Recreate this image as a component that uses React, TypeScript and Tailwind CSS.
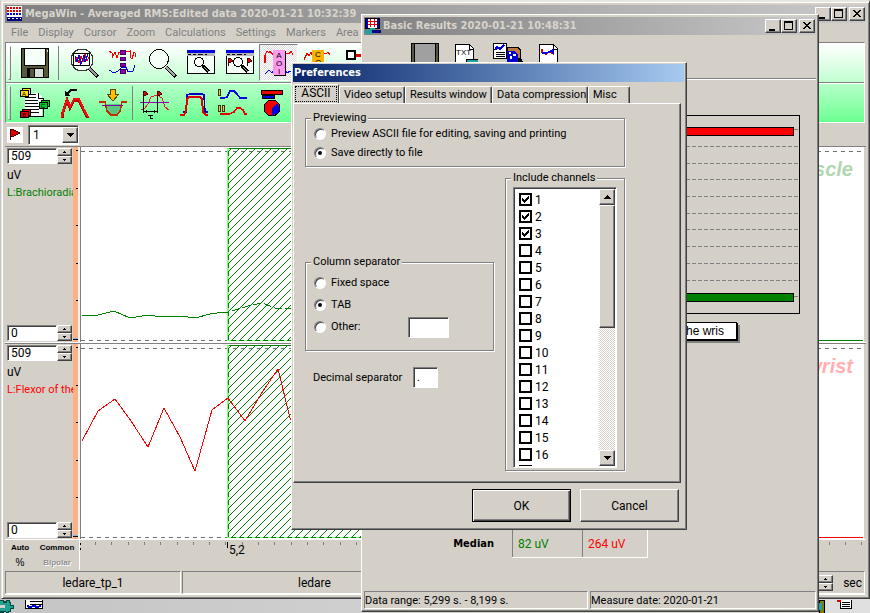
import type { ReactNode } from "react";

const RAISED =
  "border border-white border-r-[#404040] border-b-[#404040] shadow-[inset_-1px_-1px_0_#808080] bg-[#d4d0c8]";
const SUNKEN =
  "border border-[#808080] border-r-white border-b-white shadow-[inset_1px_1px_0_#404040]";
const GROUP =
  "border border-[#808080] shadow-[1px_1px_0_#fff,inset_1px_1px_0_#fff]";
const UI = "font-['Roboto','Liberation_Sans',sans-serif] text-[11px] leading-[14px]";
const TITLE = "font-['DejaVu_Sans_Condensed','DejaVu_Sans',sans-serif] text-[11px] font-bold leading-[18px]";

function Icon({ children, w = 30, h = 32 }: { children: ReactNode; w?: number; h?: number }) {
  return (
    <svg width={w} height={h} viewBox={`0 0 ${w} ${h}`} fill="none" shapeRendering="crispEdges" className="block shrink-0" aria-hidden="true">
      {children}
    </svg>
  );
}

function ToolButton({ label, children, pressed = false }: { label: string; children: ReactNode; pressed?: boolean }) {
  return (
    <button
      type="button"
      aria-label={label}
      className={`flex h-[37px] w-[39px] shrink-0 items-center justify-center ${
        pressed
          ? "border border-[#808080] border-r-white border-b-white bg-[repeating-conic-gradient(#fff_0_25%,#dcdcdc_0_50%)] bg-[length:2px_2px]"
          : ""
      }`}
    >
      {children}
    </button>
  );
}

function CaptionButtons() {
  return (
    <div className="flex shrink-0">
      <button type="button" aria-label="Minimize" className={`h-[14px] w-4 ${RAISED}`}>
        <Icon w={14} h={12}><path d="M3 9h6v2H3z" fill="#000" /></Icon>
      </button>
      <button type="button" aria-label="Maximize" className={`h-[14px] w-4 ${RAISED}`}>
        <Icon w={14} h={12}><path d="M2 1h9v9H2zM3 3v6h7V3z" fill="#000" fillRule="evenodd" /></Icon>
      </button>
      <button type="button" aria-label="Close" className={`ml-0.5 h-[14px] w-4 ${RAISED}`}>
        <Icon w={14} h={12}>
          <path d="M3 2h2v1h1v1h2V3h1V2h2v1h-1v1H9v1H8v1h1v1h1v1h1v1H9V8H8V7H6v1H5v1H3V8h1V7h1V6h1V5H5V4H4V3H3z" fill="#000" />
        </Icon>
      </button>
    </div>
  );
}

function Spinner() {
  return (
    <div className="flex w-[15px] shrink-0 flex-col">
      {["up", "down"].map((dir) => (
        <button key={dir} type="button" aria-label={dir} className={`flex h-2 w-[15px] items-center justify-center ${RAISED}`}>
          <Icon w={3} h={2}><path d={dir === "up" ? "M1 0h1v1h1v1H0V1h1z" : "M0 0h3v1H2v1H1V1H0z"} fill="#000" /></Icon>
        </button>
      ))}
    </div>
  );
}

function Flag({ x, y }: { x: number; y: number }) {
  return (
    <g transform={`translate(${x} ${y})`}>
      <path d="M0 0h1v8H0zM1 0h2v1h1v1h1v2H3v1H1z" fill="#400000" />
      <path d="M1 1h2v1h1v1H3v1H1z" fill="#e00000" />
    </g>
  );
}

function Handle() {
  return <span className="mr-1 ml-0.5 h-[34px] w-[3px] shrink-0 border border-white border-r-[#808080] border-b-[#808080]" />;
}

function SmallWindow({ children }: { children?: ReactNode }) {
  return (
    <Icon>
      <path d="M1 4h28v23H1z" fill="#f4fff8" />
      <path d="M1.500 9v17.500h27V9" stroke="#000" />
      <path d="M1 3h28v3H1z" fill="#0000e0" />
      <path d="M1 6h28v3H1z" fill="#b8b8b8" />
      <path d="M2 7.500h3m2 0h3m2 0h5m2 0h2" stroke="#000" />
      <circle cx="13" cy="15" r="4.500" fill="#fff" stroke="#000" />
      <path d="M17 19l6 6" stroke="#000" strokeWidth="3" />
      <path d="M18 20l5 5" stroke="#aaa" />
      {children}
    </Icon>
  );
}

function ToolRowOne() {
  return (
    <div className="flex h-[39px] items-center">
      <Handle />
      <ToolButton label="Save">
        <Icon>
          <path d="M1 1h28v30H1z" fill="#000" />
          <path d="M2 2h26v28H2z" fill="#57573a" />
          <path d="M4.500 1.500h21v17h-21z" fill="#f6fff8" stroke="#000" />
          <path d="M7 21h17v10H7z" fill="#000" />
          <path d="M15 22h8v8h-8z" fill="#d8e0d8" />
          <path d="M10 22h4v8h-4z" fill="#57573a" />
          <path d="M27 3h1v2h-1z" fill="#ddd" />
        </Icon>
      </ToolButton>
      <span className="mr-[5px] ml-1 h-[34px] w-px shrink-0 bg-[#808080]" />
      <ToolButton label="Zoom to data">
        <Icon>
          <circle cx="13" cy="13" r="11" fill="#f4fff8" stroke="#333" />
          <path d="M4.500 6.500h16v12h-16z" fill="#fff" stroke="#000" />
          <path d="M6 15l2-5 2 6 2-7 2 6 2-8 2 7 2-4" stroke="#e00000" />
          <path d="M6 9l2 6 2-7 2 9 3-9 1 7 3-8" stroke="#0000e0" strokeWidth="1.200" />
          <path d="M20 21l9 9" stroke="#000" strokeWidth="4" />
          <path d="M20 21l8 8" stroke="#999" strokeWidth="2" />
        </Icon>
      </ToolButton>
      <ToolButton label="Markers">
        <Icon>
          <path d="M1 4l3 2v5l3-6 2 6 2-6h7l4-1v6l2 2 2-7 1 1v4" stroke="#f00000" />
          <path d="M1 23l5 3 4-2 4-4h4l2 5 5-1 2-6" stroke="#0000e0" />
          <path d="M12.500 3.500h5v4h-5zM12.500 10.500h5v3h-5zM12.500 16.500h5v3h-5zM12.500 22.500h5v4h-5z" fill="#9000b0" stroke="#400060" />
        </Icon>
      </ToolButton>
      <ToolButton label="Magnify">
        <Icon>
          <circle cx="12" cy="12" r="9.500" fill="#f4fff8" stroke="#000" />
          <path d="M19 20l10 10" stroke="#000" strokeWidth="4" />
          <path d="M19 20l9 9" stroke="#aaa" strokeWidth="2" />
        </Icon>
      </ToolButton>
      <ToolButton label="Zoom window"><SmallWindow /></ToolButton>
      <ToolButton label="Zoom between markers">
        <SmallWindow><Flag x={3} y={11} /><Flag x={22} y={11} /></SmallWindow>
      </ToolButton>
      <ToolButton label="Area of interest" pressed>
        <Icon>
          <path d="M1 16V8l2-4 2 2 1-2 3 4M22 6l3 1 2-3 2 4" stroke="#f00000" strokeWidth="1.200" />
          <path d="M1 27l4-4 3 3 4-8 4-3 4 4 3 7 3-2 3 3" stroke="#0000e0" />
          <path d="M9 3h12v25H9z" fill="#ff90f0" fillOpacity=".9" />
          <path d="M21.500 4v24.500H10" stroke="#000" />
          <g fill="#000" fontFamily="Liberation Sans, sans-serif" fontSize="8" textAnchor="middle">
            <text x="15" y="11">A</text><text x="15" y="19">O</text><text x="15" y="27">I</text>
          </g>
        </Icon>
      </ToolButton>
      <ToolButton label="Center of gravity">
        <Icon>
          <path d="M1 13l3-7 2 3 2-4 2 5M21 6l2 1 2-2 2 3" stroke="#f00000" strokeWidth="1.200" />
          <path d="M9 3h12v26H9z" fill="#ffb400" />
          <g fill="#000" fontFamily="Liberation Sans, sans-serif" fontSize="8" textAnchor="middle">
            <text x="15" y="10">C</text><text x="15" y="18">O</text>
          </g>
        </Icon>
      </ToolButton>
      <ToolButton label="Link">
        <Icon>
          <path d="M13 8.500h17" stroke="#e00000" strokeWidth="3" />
          <path d="M5 4h8v8H5z" fill="#fff" stroke="#000" strokeWidth="2" />
        </Icon>
      </ToolButton>
    </div>
  );
}

function Cube({ x, y, fill, letter }: { x: number; y: number; fill: string; letter: string }) {
  return (
    <g transform={`translate(${x} ${y})`}>
      <path d="M2 0h9v7H9v2H0V2h2z" fill="#000" />
      <path d="M3 1h7v5H9V2H3zM1 3h7v5H1z" fill={fill} />
      <text x="4" y="8" fill="#000" fontFamily="Liberation Sans, sans-serif" fontSize="6" textAnchor="middle">{letter}</text>
    </g>
  );
}

function ToolRowTwo() {
  return (
    <div className="flex h-[38px] items-center">
      <Handle />
      <ToolButton label="Export report">
        <Icon w={32}>
          <path d="M6 6h13l4 4v19H6z" fill="#fff" />
          <path d="M19.500 6v5H24v18H10" stroke="#000" />
          <path d="M6 7.500h11M6 10.500h11M6 13.500h13M6 16.500h13M6 19.500h14M10 22.500h10M10 25.500h10" stroke="#000" />
          <Cube x={1} y={1} fill="#ffe000" letter="A" />
          <Cube x={20} y={13} fill="#00c828" letter="C" />
          <Cube x={1} y={22} fill="#e80000" letter="B" />
        </Icon>
      </ToolButton>
      <ToolButton label="Peaks">
        <Icon>
          <path d="M3 31l1-6 4-12 3 8 4-8h5l4 9 5 9" stroke="#b00000" strokeWidth="3" />
          <path d="M3 30l1-6 4-11 3 7 4-8h5l4 9 5 9" stroke="#f01010" strokeWidth="2" />
          <path d="M18 3h-6l-4 4" stroke="#000" strokeWidth="1.500" />
          <path d="M6 4v5h6z" fill="#000" />
        </Icon>
      </ToolButton>
      <ToolButton label="Fill area">
        <Icon>
          <path d="M8 17h15l-1 8-4 3h-7l-3-5z" fill="#58c880" />
          <path d="M1 15h6l2 9 4 4h6l3-4 2-9h5" stroke="#c03000" strokeWidth="1.500" />
          <path d="M4 18.500h21" stroke="#8000a0" />
          <path d="M12.500 2.500h5v5h3l-5 6h-1l-5-6h3z" fill="#ffc000" stroke="#604000" />
        </Icon>
      </ToolButton>
      <span className="mr-0.5 h-[34px] w-px shrink-0 bg-[#808080]" />
      <ToolButton label="Time between flags">
        <Icon>
          <path d="M1 22h3l4-5 3-7 6-2 5 3 3 9 4 3" stroke="#e02020" />
          <path d="M0 15.500h29" stroke="#9000c0" />
          <Flag x={3} y={4} /><Flag x={17} y={4} />
          <path d="M3.500 12v14M17.500 12v14M4 24.500h13M6.500 23v3M14.500 23v3" stroke="#000" />
          <path d="M8 28.500h5M10.500 28v3h2" stroke="#000" />
        </Icon>
      </ToolButton>
      <ToolButton label="Pulse">
        <Icon>
          <path d="M4 25h3l1-17 3-1h12l2 1 1 17h3" stroke="#0000c0" strokeWidth="1.500" />
          <path d="M1 28h4l2-4 1-12 2-2h11l2 2 1 13 3 3h2" stroke="#e00000" strokeWidth="2" />
        </Icon>
      </ToolButton>
      <ToolButton label="Compare signals">
        <Icon>
          <path d="M2 11h4l3-1 3-6h4l3 3 3 4h7" stroke="#0000e0" strokeWidth="1.500" />
          <path d="M2 27h9l5-2 3-4h3l3 2 2 4h2" stroke="#e00000" strokeWidth="1.500" />
          <path d="M.5 2.500h2v6h-2zM.5 18.500h2v6h-2zM4.500 18.500h2v6h-2z" fill="#ffd000" stroke="#403000" />
        </Icon>
      </ToolButton>
      <ToolButton label="Charts">
        <Icon>
          <path d="M4.500 3.500h21v4h-21z" fill="#f00000" stroke="#000" />
          <path d="M5.500 8.500h12v3h-12z" fill="#0000e0" stroke="#000" />
          <circle cx="15" cy="21" r="8" fill="#f00000" stroke="#000" />
          <path d="M15 22l5-6 2 4v4l-3 3-4 1z" fill="#0000e0" />
        </Icon>
      </ToolButton>
    </div>
  );
}

type ChannelProps = {
  name: string;
  nameClass: string;
  color: string;
  points: string;
  dashedPoints: string;
  watermark: string;
  watermarkClass: string;
  id: string;
};

function Channel({ name, nameClass, color, points, dashedPoints, watermark, watermarkClass, id }: ChannelProps) {
  return (
    <div className="flex min-h-0 flex-1 border-t border-b border-t-[#808080] border-b-white">
      <div className="flex w-[68px] shrink-0 flex-col justify-between overflow-hidden px-0.5 py-px">
        <div>
          <div className="flex">
            <input aria-label={`${name} maximum`} defaultValue="509" className={`h-4 w-[50px] bg-white px-[3px] text-[12px] ${SUNKEN}`} />
            <Spinner />
          </div>
          <p className="mt-1 text-[12px]">uV</p>
          <p className={`mt-1 whitespace-nowrap ${nameClass}`}>{name}</p>
        </div>
        <div className="flex">
          <input aria-label={`${name} minimum`} defaultValue="0" className={`h-4 w-[50px] bg-white px-[3px] text-[12px] ${SUNKEN}`} />
          <Spinner />
        </div>
      </div>
      <div className="flex w-[5px] shrink-0 flex-col items-end justify-between bg-[#ffb080] pt-[3px] pb-0.5">
        {[0, 1, 2, 3, 4].map((t) => <span key={t} className="h-px w-0.5 bg-black" />)}
        <span className="h-0.5 w-full border-b border-black bg-[#80b8e0]" />
      </div>
      <div className="w-[3px] shrink-0 border-r border-[#808080] bg-[#f4f2ee]" />
      <div className="relative min-w-0 flex-1 bg-white">
        <svg className="block h-full w-full" shapeRendering="crispEdges" fill="none" aria-hidden="true">
          <defs>
            <pattern id={id} width="8" height="8" patternUnits="userSpaceOnUse">
              <path d="M-1 9L9-1M-1 1L1-1M7 9L9 7" stroke="#008000" strokeWidth="1" />
            </pattern>
          </defs>
          <path d="M0 4.500H2000M0 193.500H280" stroke="#707070" strokeDasharray="4 4" />
          <path d="M147 1h150v193H147z" fill={`url(#${id})`} />
          <path d="M146.500 1v193" stroke="#80ff80" />
          <path d="M147.500 1v193M147 1.500h150M147 193.500h150" stroke="#008000" />
          <path d="M147.500 1v193M147 193.500h150" stroke="#80ff80" strokeDasharray="3 5" />
          <polyline points={points} stroke={color} />
          <polyline points={dashedPoints} stroke={color} strokeDasharray={id === "hatch-a" ? "8 3" : undefined} />
          <path d="M600 193.500H2000" stroke={color} />
        </svg>
        <span className={`absolute top-2.5 right-2.5 font-['Liberation_Sans',sans-serif] text-[20px] leading-6 font-bold italic ${watermarkClass}`}>{watermark}</span>
      </div>
      <div className="w-[3px] shrink-0 border-l border-white" />
    </div>
  );
}

const AXIS_TICKS = Array.from({ length: 48 }, (_, i) => 15.5 + Math.round(i * 16.3));

function MainWindow() {
  return (
    <section aria-label="MegaWin" className={`absolute top-0 right-0 bottom-[14px] left-px flex flex-col border border-t-2 border-[#e8e6e0] border-r-[#404040] border-b-[#404040] bg-[#d4d0c8] p-[3px] shadow-[inset_1px_1px_0_#fff,inset_-1px_-1px_0_#808080] ${UI}`}>
      <header className={`flex h-[18px] shrink-0 items-center bg-linear-to-r from-[#808080] to-[#c8c8c8] pr-px text-[#d8d4cc] ${TITLE}`}>
        <Icon w={19} h={16}>
          <path d="M2 0h15v15H2z" fill="#fff" />
          <path d="M2 2h15M2 5h15" stroke="#e00000" strokeWidth="2" strokeDasharray="2 1" />
          <path d="M2 8h15" stroke="#0000e0" strokeWidth="2" strokeDasharray="2 1" />
          <path d="M2 11h15v4H2z" fill="#000080" />
          <path d="M3 12.500h13" stroke="#fff" strokeDasharray="2 2" />
        </Icon>
        <h1 className="min-w-0 flex-1 truncate pl-px">MegaWin - Averaged RMS:Edited data 2020-01-21 10:32:39</h1>
        <CaptionButtons />
      </header>
      <nav className="flex h-[19px] shrink-0 items-center gap-2.5 pl-1.5 text-[#808080]">
        {["File", "Display", "Cursor", "Zoom", "Calculations", "Settings", "Markers", "Area"].map((m) => (
          <button key={m} type="button">{m}</button>
        ))}
      </nav>
      <div className="mr-px h-[81px] shrink-0 border border-[#808080] border-r-white border-b-white bg-linear-to-b from-white to-[#66ff90]">
        <div className="border-b border-[#808080] bg-linear-to-b from-white to-[#c0ffd0]"><ToolRowOne /></div>
        <div className="border-t border-white bg-linear-to-b from-[#b4ffc8] to-[#68ff90]"><ToolRowTwo /></div>
      </div>
      <div className="flex h-[23px] shrink-0 items-center gap-[5px] pl-0.5">
        <button type="button" aria-label="Event flag" className="size-4 bg-white">
          <Icon w={16} h={16}>
            <path d="M3 2h1v11H3zM4 2h3v1h2v1h2v1h2v2h-2v1H9v1H7v1H4z" fill="#400000" />
            <path d="M4 3h3v1h2v1h2v2H9v1H7v1H4z" fill="#d80000" />
          </Icon>
        </button>
        <div className="relative">
          <select aria-label="Event" defaultValue="1" className={`block h-5 w-[51px] appearance-none rounded-none bg-white px-1 text-[12px] ${SUNKEN}`}>
            <option>1</option>
            <option>2</option>
          </select>
          <span className={`pointer-events-none absolute top-0.5 right-px flex h-4 w-4 items-center justify-center ${RAISED}`}>
            <Icon w={7} h={4}><path d="M0 0h7L4 4H3z" fill="#000" /></Icon>
          </span>
        </div>
      </div>
      <main className="flex min-h-0 flex-1 flex-col">
        <Channel
          id="hatch-a" name="L:Brachioradialis" nameClass="text-[#008000]" color="#008000"
          points="1,169 17,168 33,164 49,171 67,168 81,170 99,169 114,171 129,167 144,165 147,165"
          dashedPoints="151,164 167,159 181,156 197,162 209,161 240,164"
          watermark="muscle" watermarkClass="text-[#b0d8b0]"
        />
        <Channel
          id="hatch-b" name="L:Flexor of the wrist" nameClass="text-[#ff0000]" color="#ff0000"
          points="1,97 17,67 34,55 50,77 67,103 83,64 99,93 114,127 131,66 147,54"
          dashedPoints="147,54 164,77 180,50 197,25 209,74 220,100"
          watermark="wrist" watermarkClass="text-[#ffb0b0]"
        />
      </main>
      <div className="flex h-[30px] shrink-0">
        <div className="grid w-[75px] shrink-0 grid-cols-[30px_1fr] border-r border-white text-center font-['Liberation_Sans',sans-serif] text-[8px] leading-[15px] font-bold">
          <span>Auto</span>
          <span>Common</span>
          <span className="text-[10px] font-normal">%</span>
          <span className="text-[#909090] [text-shadow:1px_1px_0_#fff]">Bipolar</span>
        </div>
        <svg className="h-full min-w-0 flex-1" shapeRendering="crispEdges" aria-label="Time axis">
          <path d={AXIS_TICKS.map((x) => `M${x} 2v3`).join("")} stroke="#808080" fill="none" />
          <path d="M147.500 2v6M.5 3v2M.5 8v2" stroke="#000" />
          <text x="149" y="14" fontSize="12" fill="#000">5,2</text>
        </svg>
      </div>
      <footer className="flex h-[25px] shrink-0 gap-px border-b border-white pt-px pr-px text-[12px]">
        <div className="flex w-[176px] items-center justify-center border border-[#808080] border-r-white border-b-white">ledare_tp_1</div>
        <div className="flex w-[265px] items-center justify-center border border-[#808080] border-r-white border-b-white">ledare</div>
        <div className="flex flex-1 items-center justify-end gap-2.5 border border-[#808080] border-r-white border-b-white pr-0.5">
          <Spinner />
          <span>sec</span>
        </div>
      </footer>
    </section>
  );
}

function ResultsWindow() {
  return (
    <section aria-label="Basic Results" className={`absolute top-[14px] bottom-px left-[361px] flex w-[458px] flex-col border border-white border-r-[#404040] border-b-[#404040] bg-[#d4d0c8] p-0.5 shadow-[inset_-1px_-1px_0_#808080] ${UI}`}>
      <header className={`flex h-[18px] shrink-0 items-center bg-linear-to-r from-[#808080] to-[#c8c8c8] pr-px text-[#d8d4cc] ${TITLE}`}>
        <Icon w={18} h={16}>
          <path d="M1 0h15v11H1z" fill="#000" />
          <path d="M2 1h13v9H2z" fill="#0000c0" />
          <path d="M4 1h9v9H4z" fill="#fff" />
          <path d="M4 3.500h9M4 6.500h9M6.500 1v8M10.500 1v8" stroke="#e00000" />
          <path d="M1 12h3l2-2h5v3l-3 3H1z" fill="#20a0a0" />
          <path d="M8 12h9v3H8z" fill="#000080" />
        </Icon>
        <h2 className="min-w-0 flex-1 truncate pl-px">Basic Results 2020-01-21 10:48:31</h2>
        <CaptionButtons />
      </header>
      <div className="flex h-[44px] shrink-0 items-start gap-[15px] border-b border-[#808080] pt-2 pl-[47px] shadow-[0_1px_0_#fff]">
        <button type="button" aria-label="Save">
          <Icon w={28} h={30}><path d="M0 0h28v30H0z" fill="#000" /><path d="M1 1h2v28H1zM25 1h2v28h-2z" fill="#57573a" /><path d="M4 1h20v18H4z" fill="#a0a0a0" /></Icon>
        </button>
        <button type="button" aria-label="Export text">
          <Icon w={24} h={30}>
            <path d="M1 1h14l5 5v23H1z" fill="#fff" />
            <path d="M1.500 29V1.500h14l4 4V29M15.500 1v5h4" stroke="#000" />
            <text x="2" y="12" fontSize="8" fill="#000" fontFamily="Liberation Sans, sans-serif">TXT</text>
            <path d="M12.500 16.500h12v6h-12z" fill="#20a0a0" stroke="#000" />
          </Icon>
        </button>
        <button type="button" aria-label="Report">
          <Icon w={30} h={30}>
            <path d="M14 4h11l3 3v8l2 4H14z" fill="#000" />
            <path d="M15 5h10l2 3v7H15z" fill="#b87840" />
            <path d="M14 8h8l3 4v7H14z" fill="#0000d0" />
            <path d="M16 9h2v2h-2zM20 11h3v2h-3zM17 13h2v3h-2z" fill="#fff" />
            <path d="M.5.500h13v15H.5z" fill="#fff" stroke="#000" />
            <path d="M2 7l2-3 3 2 4-4" stroke="#0000e0" strokeWidth="2" />
            <path d="M3 9.500h9M3 11.500h9M3 13.500h9" stroke="#000" />
          </Icon>
        </button>
        <button type="button" aria-label="Graph report">
          <Icon w={22} h={30}>
            <path d="M1 1h14l5 5v23H1z" fill="#fff" />
            <path d="M1.500 29V1.500h14l4 4V29M15.500 1v5h4" stroke="#000" />
            <path d="M4 6v3l4 2 3-2 5 2" stroke="#e00000" strokeWidth="1.500" />
            <path d="M4 10h4l3-1 4-2v4" stroke="#0000e0" strokeWidth="1.500" />
          </Icon>
        </button>
      </div>
      <div className="flex shrink-0 justify-end pt-[36px] pr-4">
        <svg width="320" height="199" shapeRendering="crispEdges" fill="none" role="img" aria-label="Channel averages">
          <path d="M.5.500h319v198H.5z" stroke="#000" />
          <path
            d="M2 14.500h317M2 31.500h317M2 48.500h317M2 64.500h317M2 81.500h317M2 98.500h317M2 114.500h317M2 131.500h317M2 148.500h317M2 165.500h317M2 181.500h317"
            stroke="#808080" strokeDasharray="4 2"
          />
          <path d="M20.500 12.500h293v8h-293z" fill="#ff0000" stroke="#000" />
          <path d="M20.500 178.500h293v8h-293z" fill="#008000" stroke="#000" />
        </svg>
      </div>
      <div className="flex shrink-0 justify-end pt-2 pr-[79px]">
        <span className="border border-black bg-white py-px pr-3 pl-4 font-['Liberation_Sans',sans-serif] text-[12px] shadow-[1px_1px_0_#000,3px_3px_0_#808080]">the wris</span>
      </div>
      <div className="flex flex-1 flex-col items-end justify-end pr-[168px] pb-[33px]">
        <table className="border-collapse">
          <tbody>
            <tr>
              <th scope="row" className={`pr-[18px] ${TITLE}`}>Median</th>
              <td className="h-7 w-[70px] border border-[#808080] border-b-white pl-[5px] text-[12px] text-[#008000]">82 uV</td>
              <td className="h-7 w-[65px] border border-[#808080] border-r-white border-b-white border-l-[#b8b8c0] pl-[5px] text-[12px] text-[#ff0000]">264 uV</td>
            </tr>
          </tbody>
        </table>
      </div>
      <footer className="flex h-[18px] shrink-0 gap-0.5">
        <div className="w-[224px] truncate border border-[#808080] border-r-white border-b-white leading-[17px]">Data range: 5,299 s. - 8,199 s.</div>
        <div className="flex-1 truncate border border-[#808080] border-r-white border-b-white leading-[17px]">Measure date: 2020-01-21</div>
      </footer>
    </section>
  );
}

function Radio({ name, label, checked = false }: { name: string; label: string; checked?: boolean }) {
  return (
    <label className="flex items-center gap-[5px]">
      <span className="relative block size-3">
        <input
          type="radio" name={name} defaultChecked={checked}
          className="peer block size-3 appearance-none rounded-full border border-[#808080] border-r-white border-b-white bg-white shadow-[inset_1px_1px_0_#404040]"
        />
        <span className="pointer-events-none absolute top-1 left-1 hidden size-1 rounded-full bg-black peer-checked:block" />
      </span>
      {label}
    </label>
  );
}

function ChannelCheck({ n }: { n: number }) {
  return (
    <label className="flex h-[17px] items-center gap-[3px] text-[12px]">
      <span className="relative block size-[13px]">
        <input type="checkbox" defaultChecked={n <= 3} className="peer block size-[13px] appearance-none border-2 border-black bg-white" />
        <svg className="pointer-events-none absolute inset-0 hidden size-[13px] peer-checked:block" viewBox="0 0 13 13" shapeRendering="crispEdges" aria-hidden="true">
          <path d="M3 5h1v1h1v1h1V6h1V5h1V4h1V3h1v3H9v1H8v1H7v1H6v1H5V9H4V8H3z" fill="#000" />
        </svg>
      </span>
      {n}
    </label>
  );
}

const TABS: [string, string][] = [
  ["Video setup", "w-[66px]"],
  ["Results window", "w-[87px]"],
  ["Data compression", "w-[96px]"],
  ["Misc", "w-[42px]"],
];

function PreferencesDialog() {
  return (
    <section role="dialog" aria-label="Preferences" className={`absolute top-[62px] left-[291px] flex w-[396px] flex-col border border-white border-r-[#404040] border-b-[#404040] bg-[#d4d0c8] px-px pt-px pb-[7px] shadow-[inset_-1px_-1px_0_#808080] ${UI}`}>
      <header className={`mr-px h-[18px] bg-linear-to-r from-[#0a246a] to-[#a6caf0] pl-px text-white ${TITLE}`}>
        <h2>Preferences</h2>
      </header>
      <div role="tablist" className="flex h-[21px] items-end pt-0.5">
        <button type="button" role="tab" aria-selected="true" className="h-[19px] w-[46px] rounded-t-[2px] border-t border-r border-l border-white border-r-[#404040] p-px">
          <span className="block h-4 border border-dotted border-black text-[12px] leading-[13px]">ASCII</span>
        </button>
        {TABS.map(([t, w]) => (
          <button key={t} type="button" role="tab" aria-selected="false" className={`h-[17px] rounded-t-[2px] border-t border-r border-l border-white border-r-[#404040] pl-1 text-left whitespace-nowrap shadow-[inset_-1px_0_0_#808080] ${w}`}>{t}</button>
        ))}
      </div>
      <div role="tabpanel" className="mr-1 h-[380px] border border-white border-r-[#404040] border-b-[#404040] px-[11px] pt-[7px] shadow-[inset_-1px_-1px_0_#808080]">
        <fieldset className={`h-[56px] w-[320px] px-[5px] ${GROUP}`}>
          <legend className="bg-[#d4d0c8] px-0.5">Previewing</legend>
          <div className="flex flex-col gap-[5px] px-[3px] pt-0.5">
            <Radio name="preview" label="Preview ASCII file for editing, saving and printing" />
            <Radio name="preview" label="Save directly to file" checked />
          </div>
        </fieldset>
        <div className="mt-1 flex w-[320px] items-start justify-between">
          <div className="w-[189px] pt-[84px]">
            <fieldset className={`h-[96px] px-[5px] ${GROUP}`}>
              <legend className="bg-[#d4d0c8] px-0.5">Column separator</legend>
              <div className="flex flex-col px-[3px] pt-[3px]">
                <div className="flex h-[22px] items-center"><Radio name="separator" label="Fixed space" /></div>
                <div className="flex h-[22px] items-center"><Radio name="separator" label="TAB" checked /></div>
                <div className="flex h-[22px] items-center justify-between pr-9">
                  <Radio name="separator" label="Other:" />
                  <input aria-label="Other separator" className={`h-[21px] w-[41px] bg-white px-1 ${SUNKEN}`} />
                </div>
              </div>
            </fieldset>
            <div className="mt-4 flex items-center justify-between pr-14 pl-2">
              <label htmlFor="decimal">Decimal separator</label>
              <input id="decimal" defaultValue="." className={`h-[21px] w-[25px] bg-white px-[3px] ${SUNKEN}`} />
            </div>
          </div>
          <fieldset className={`h-[300px] w-[120px] px-[5px] ${GROUP}`}>
            <legend className="bg-[#d4d0c8] px-0.5">Include channels</legend>
            <div className={`mt-0.5 ml-0.5 flex h-[281px] w-[104px] overflow-hidden bg-white p-px ${SUNKEN}`}>
              <div className="min-h-0 flex-1 overflow-hidden pt-0.5 pl-1">
                {Array.from({ length: 17 }, (_, i) => <ChannelCheck key={i} n={i + 1} />)}
              </div>
              <div className="flex w-4 flex-col bg-[repeating-conic-gradient(#fff_0_25%,#d4d0c8_0_50%)] bg-[length:2px_2px]">
                <button type="button" aria-label="Scroll up" className={`flex h-4 items-center justify-center ${RAISED}`}>
                  <Icon w={7} h={4}><path d="M3 0h1l3 4H0z" fill="#000" /></Icon>
                </button>
                <div className={`h-[123px] ${RAISED}`} />
                <button type="button" aria-label="Scroll down" className={`mt-auto flex h-4 items-center justify-center ${RAISED}`}>
                  <Icon w={7} h={4}><path d="M0 0h7L4 4H3z" fill="#000" /></Icon>
                </button>
              </div>
            </div>
          </fieldset>
        </div>
      </div>
      <div className="flex justify-end gap-[9px] pt-[6px] pr-[6px]">
        <button type="button" className="h-[33px] w-[99px] border border-black bg-[#d4d0c8] text-[12px] shadow-[inset_1px_1px_0_#fff,inset_-1px_-1px_0_#404040,inset_-2px_-2px_0_#808080]">OK</button>
        <button type="button" className={`h-[33px] w-[99px] text-[12px] ${RAISED}`}>Cancel</button>
      </div>
    </section>
  );
}

function Desktop() {
  return (
    <div className="flex h-full flex-col justify-between bg-linear-to-r from-[#c4c4c4] to-[#e0e0e0]">
      <div className="h-[120px] w-0.5 bg-linear-to-b from-[#d4d0c8] to-[#80ffa0]" />
      <div className="flex h-[14px] items-end justify-between pr-[17px]">
        <div className="flex items-end gap-2.5">
          <Icon w={14} h={13}>
            <path d="M0 0h4v1h2V0h4v2h1v3h3v4h-3v3h-2v1H6v-1H4v1H0z" fill="#004840" />
            <path d="M0 1h3v2h4V1h2v2h1v3h3v2h-3v3H8v1H6v-1H0z" fill="#20a090" />
            <path d="M0 5h5v3H0z" fill="#d0d0d0" />
          </Icon>
          <Icon w={20} h={13}>
            <path d="M1.500 0v8.500h17V0" fill="#fff" stroke="#000" /><path d="M6 1.500h13M6 4.500h13" stroke="#000" />
            <path d="M3 6l3 1 4-1 3 1 4-1" stroke="#0000e0" strokeWidth="2" />
          </Icon>
        </div>
        <div className="flex items-end gap-3">
          <Icon w={6} h={13}><path d="M0 0h5v13H0z" fill="#808000" stroke="#000" /><path d="M0 3h3v7H0z" fill="#20a0a0" /></Icon>
          <Icon w={16} h={13}>
            <path d="M3.500 0v8.500h11V0" fill="#fff" stroke="#000" /><path d="M5 2.500h8M5 4.500h8M5 6.500h8" stroke="#000" />
            <path d="M0 0h4v2H0z" fill="#e00000" />
          </Icon>
        </div>
      </div>
    </div>
  );
}

export default function App() {
  return (
    <div className="relative h-screen w-full overflow-hidden">
      <Desktop />
      <MainWindow />
      <ResultsWindow />
      <PreferencesDialog />
    </div>
  );
}
